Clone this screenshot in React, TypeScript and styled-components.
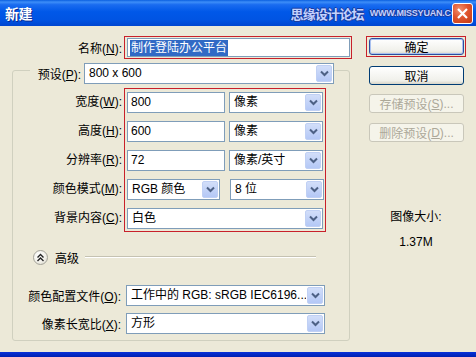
import React from "react";
import styled, { createGlobalStyle } from "styled-components";

const GlobalStyle = createGlobalStyle`
  html, body {
    margin: 0;
    padding: 0;
    background: #ece9d8;
  }
  body {
    font-family: "Liberation Sans", "Noto Sans CJK SC", sans-serif;
    font-size: 12px;
    color: #000;
  }
`;

const Arrow = () => (
  <svg width="9" height="7" viewBox="0 0 9 7">
    <path d="M1 1.5 4.5 5 8 1.5" fill="none" stroke="#4d6185" strokeWidth="2" />
  </svg>
);

const Select: React.FC<{ width: number; children?: React.ReactNode }> = ({ width, children }) => (
  <SelectBox style={{ width }}>
    <SelectText>{children}</SelectText>
    <ArrowButton>
      <Arrow />
    </ArrowButton>
  </SelectBox>
);

const Label: React.FC<{ text: string; k: string }> = ({ text, k }) => (
  <>
    {text}(<u>{k}</u>):
  </>
);

export default function App() {
  return (
    <Window>
      <GlobalStyle />
      <TitleBar>
        <Title>新建</Title>
        <Watermark>
          <WatermarkCn>思缘设计论坛</WatermarkCn>
          <WatermarkUrl>WWW.MISSYUAN.COM</WatermarkUrl>
        </Watermark>
        <CloseButton>
          <svg width="11" height="11" viewBox="0 0 11 11">
            <path d="M1 1 10 10M10 1 1 10" stroke="#fff" strokeWidth="2.2" />
          </svg>
        </CloseButton>
      </TitleBar>

      <Content>
        <LeftColumn>
          <NameRow>
            <NameLabel>
              <Label text="名称" k="N" />
            </NameLabel>
            <NameFrame>
              <TextInput>
                <Selected>制作登陆办公平台</Selected>
              </TextInput>
            </NameFrame>
          </NameRow>

          <Group>
            <PresetRow>
              <PresetLabel>
                <Label text="预设" k="P" />
              </PresetLabel>
              <Select width={250}>800 x 600</Select>
            </PresetRow>

            <FieldsBlock>
              <LabelColumn>
                <RowLabel>
                  <Label text="宽度" k="W" />
                </RowLabel>
                <RowLabel>
                  <Label text="高度" k="H" />
                </RowLabel>
                <RowLabel>
                  <Label text="分辨率" k="R" />
                </RowLabel>
                <RowLabel>
                  <Label text="颜色模式" k="M" />
                </RowLabel>
                <RowLabel>
                  <Label text="背景内容" k="C" />
                </RowLabel>
              </LabelColumn>
              <RedFrame>
                <FieldRow>
                  <NumberInput>800</NumberInput>
                  <Select width={94}>像素</Select>
                </FieldRow>
                <FieldRow>
                  <NumberInput>600</NumberInput>
                  <Select width={94}>像素</Select>
                </FieldRow>
                <FieldRow>
                  <NumberInput>72</NumberInput>
                  <Select width={94}>像素/英寸</Select>
                </FieldRow>
                <FieldRow $gap={10}>
                  <Select width={93}>RGB 颜色</Select>
                  <Select width={94}>8 位</Select>
                </FieldRow>
                <FieldRow>
                  <Select width={196}>白色</Select>
                </FieldRow>
              </RedFrame>
            </FieldsBlock>

            <AdvancedRow>
              <RoundToggle>
                <svg width="9" height="9" viewBox="0 0 9 9">
                  <path d="M1.5 4.5 4.5 1.5 7.5 4.5M1.5 8 4.5 5 7.5 8" fill="none" stroke="#222" strokeWidth="1.4" />
                </svg>
              </RoundToggle>
              <AdvancedText>高级</AdvancedText>
              <Rule />
            </AdvancedRow>

            <ProfileRows>
              <ProfileRow>
                <ProfileLabel>
                  <Label text="颜色配置文件" k="O" />
                </ProfileLabel>
                <Select width={199}>工作中的 RGB: sRGB IEC6196...</Select>
              </ProfileRow>
              <ProfileRow>
                <ProfileLabel>
                  <Label text="像素长宽比" k="X" />
                </ProfileLabel>
                <Select width={199}>方形</Select>
              </ProfileRow>
            </ProfileRows>
          </Group>
        </LeftColumn>

        <RightColumn>
          <OkFrame>
            <OkButton>确定</OkButton>
          </OkFrame>
          <Button $top={9}>取消</Button>
          <Button $top={9} $disabled>
            存储预设(<u>S</u>)...
          </Button>
          <Button $top={10} $disabled>
            删除预设(<u>D</u>)...
          </Button>
          <SizeInfo>
            <div>图像大小:</div>
            <SizeValue>1.37M</SizeValue>
          </SizeInfo>
        </RightColumn>
      </Content>
      <BottomEdge />
    </Window>
  );
}

const Window = styled.div`
  width: 476px;
  height: 357px;
  display: flex;
  flex-direction: column;
  background: #ece9d8;
  overflow: hidden;
`;

const TitleBar = styled.div`
  height: 26px;
  flex: none;
  display: flex;
  align-items: center;
  padding-left: 5px;
  background: linear-gradient(
    #0a5fe0 0%,
    #3d8ef8 8%,
    #1a6cf0 18%,
    #0058e8 45%,
    #0054e3 75%,
    #0046d0 100%
  );
  position: relative;
`;

const Title = styled.div`
  color: #fff;
  font-family: "Noto Sans CJK SC", sans-serif;
  font-weight: 700;
  font-size: 14px;
  letter-spacing: -0.5px;
  text-shadow: 1px 1px 0 #0a2a90;
`;

const Watermark = styled.div`
  margin-left: auto;
  margin-right: 11px;
  display: flex;
  align-items: center;
  gap: 6px;
  color: #c4d2ff;
`;

const WatermarkCn = styled.span`
  font-family: "Noto Sans CJK SC", sans-serif;
  font-size: 13px;
  font-weight: 700;
  letter-spacing: -0.8px;
  text-shadow: -1px 0 0 #1c3c9c, 1px 0 0 #1c3c9c, 0 -1px 0 #1c3c9c, 0 1px 0 #1c3c9c;
`;

const WatermarkUrl = styled.span`
  font-family: "Liberation Sans", sans-serif;
  font-size: 9px;
  font-weight: 700;
  letter-spacing: -0.2px;
  text-shadow: -1px 0 0 #1c3c9c, 1px 0 0 #1c3c9c, 0 -1px 0 #1c3c9c, 0 1px 0 #1c3c9c;
`;

const CloseButton = styled.div`
  position: absolute;
  right: 3px;
  top: 3px;
  width: 19px;
  height: 19px;
  border: 1px solid #fff;
  border-radius: 3px;
  background: radial-gradient(circle at 35% 30%, #f09070 0%, #e0552e 45%, #c23a14 100%);
  display: flex;
  align-items: center;
  justify-content: center;
`;

const Content = styled.div`
  flex: 1;
  display: flex;
  padding-top: 10px;
`;

const LeftColumn = styled.div`
  margin-left: 12px;
  width: 341px;
  display: flex;
  flex-direction: column;
`;

const NameRow = styled.div`
  display: flex;
  align-items: center;
`;

const NameLabel = styled.div`
  width: 110px;
  margin-right: 2px;
  text-align: right;
`;

const RedBorder = "#c8202a";

const NameFrame = styled.div`
  width: 228px;
  height: 23px;
  box-sizing: border-box;
  border: 1px solid ${RedBorder};
  padding: 1px 1px 1px 2px;
  display: flex;
`;

const TextInput = styled.div`
  flex: 1;
  background: #fff;
  border: 1px solid #7f9db9;
  display: flex;
  align-items: center;
  padding-left: 2px;
`;

const Selected = styled.span`
  background: #316ac5;
  color: #fff;
  line-height: 16px;
  padding: 0 1px;
`;

const Group = styled.div`
  margin-top: 11px;
  width: 338px;
  height: 271px;
  box-sizing: border-box;
  border: 1px solid #d0d0bf;
  border-radius: 3px;
  display: flex;
  flex-direction: column;
`;

const PresetRow = styled.div`
  margin-top: -8px;
  margin-left: 17px;
  display: flex;
  align-items: center;
`;

const PresetLabel = styled.div`
  width: 54px;
  box-sizing: border-box;
  padding-right: 3px;
  text-align: right;
  background: #ece9d8;
`;

const SelectBox = styled.div`
  height: 21px;
  box-sizing: border-box;
  border: 1px solid #7f9db9;
  background: #fff;
  display: flex;
  align-items: stretch;
  flex: none;
`;

const SelectText = styled.div`
  flex: 1;
  padding-left: 4px;
  line-height: 19px;
  white-space: nowrap;
  overflow: hidden;
`;

const ArrowButton = styled.div`
  width: 16px;
  margin: 1px;
  border-radius: 2px;
  background: linear-gradient(#d2def9, #b4c8f6);
  border: 1px solid #c0d0f4;
  box-sizing: border-box;
  display: flex;
  align-items: center;
  justify-content: center;
`;

const FieldsBlock = styled.div`
  margin-top: 4px;
  display: flex;
`;

const LabelColumn = styled.div`
  width: 109px;
  margin-right: 2px;
  padding-top: 4px;
  display: flex;
  flex-direction: column;
  gap: 8px;
`;

const RowLabel = styled.div`
  height: 21px;
  line-height: 21px;
  text-align: right;
  white-space: nowrap;
`;

const RedFrame = styled.div`
  width: 202px;
  box-sizing: border-box;
  border: 1px solid ${RedBorder};
  padding: 3px 2px 2px 2px;
  display: flex;
  flex-direction: column;
  gap: 8px;
`;

const FieldRow = styled.div<{ $gap?: number }>`
  display: flex;
  gap: ${(p) => p.$gap ?? 4}px;
`;

const NumberInput = styled.div`
  width: 98px;
  height: 21px;
  box-sizing: border-box;
  border: 1px solid #7f9db9;
  background: #fff;
  padding-left: 3px;
  line-height: 19px;
`;

const AdvancedRow = styled.div`
  margin-top: 17px;
  margin-left: 20px;
  height: 16px;
  display: flex;
  align-items: center;
`;

const RoundToggle = styled.div`
  width: 15px;
  height: 15px;
  box-sizing: border-box;
  border-radius: 50%;
  border: 1px solid #a4a39a;
  background: radial-gradient(circle at 40% 35%, #ffffff 0%, #f2f1ea 55%, #d6d3c4 100%);
  display: flex;
  align-items: center;
  justify-content: center;
`;

const AdvancedText = styled.span`
  margin-left: 7px;
`;

const Rule = styled.div`
  flex: 1;
  margin-left: 6px;
  margin-right: 33px;
  height: 1px;
  background: #c5c2b2;
  border-bottom: 1px solid #fff;
`;

const ProfileRows = styled.div`
  margin-top: 20px;
  display: flex;
  flex-direction: column;
  gap: 7px;
`;

const ProfileRow = styled.div`
  display: flex;
  align-items: center;
`;

const ProfileLabel = styled.div`
  width: 108px;
  margin-right: 5px;
  text-align: right;
  white-space: nowrap;
`;

const RightColumn = styled.div`
  margin-left: 13px;
  width: 100px;
  display: flex;
  flex-direction: column;
`;

const OkFrame = styled.div`
  width: 100px;
  height: 21px;
  box-sizing: border-box;
  border: 1px solid ${RedBorder};
  padding: 1px 1px 1px 2px;
  display: flex;
`;

const OkButton = styled.div`
  flex: 1;
  border: 1px solid #2c4f9e;
  border-radius: 3px;
  background: linear-gradient(#ffffff, #f0f0ea 80%, #d8d5c8);
  box-shadow: inset 0 0 0 1px #a9c1f0;
  display: flex;
  align-items: center;
  justify-content: center;
  font-family: "Noto Sans CJK SC", sans-serif;
  font-size: 12px;
  line-height: 1;
`;

const Button = styled.div<{ $top: number; $disabled?: boolean }>`
  margin-top: ${(p) => p.$top}px;
  margin-left: 3px;
  width: 95px;
  height: 19px;
  box-sizing: border-box;
  border: 1px solid ${(p) => (p.$disabled ? "#c9c7ba" : "#003c74")};
  border-radius: 3px;
  background: ${(p) =>
    p.$disabled ? "#f5f4ea" : "linear-gradient(#ffffff, #f0f0ea 80%, #d8d5c8)"};
  color: ${(p) => (p.$disabled ? "#aca899" : "#000")};
  display: flex;
  align-items: center;
  justify-content: center;
  white-space: nowrap;
`;

const SizeInfo = styled.div`
  margin-top: 68px;
  text-align: center;
  line-height: 14px;
`;

const SizeValue = styled.div`
  margin-top: 11px;
`;

const BottomEdge = styled.div`
  height: 5px;
  flex: none;
  background: linear-gradient(#0831d9, #0020b0);
`;
